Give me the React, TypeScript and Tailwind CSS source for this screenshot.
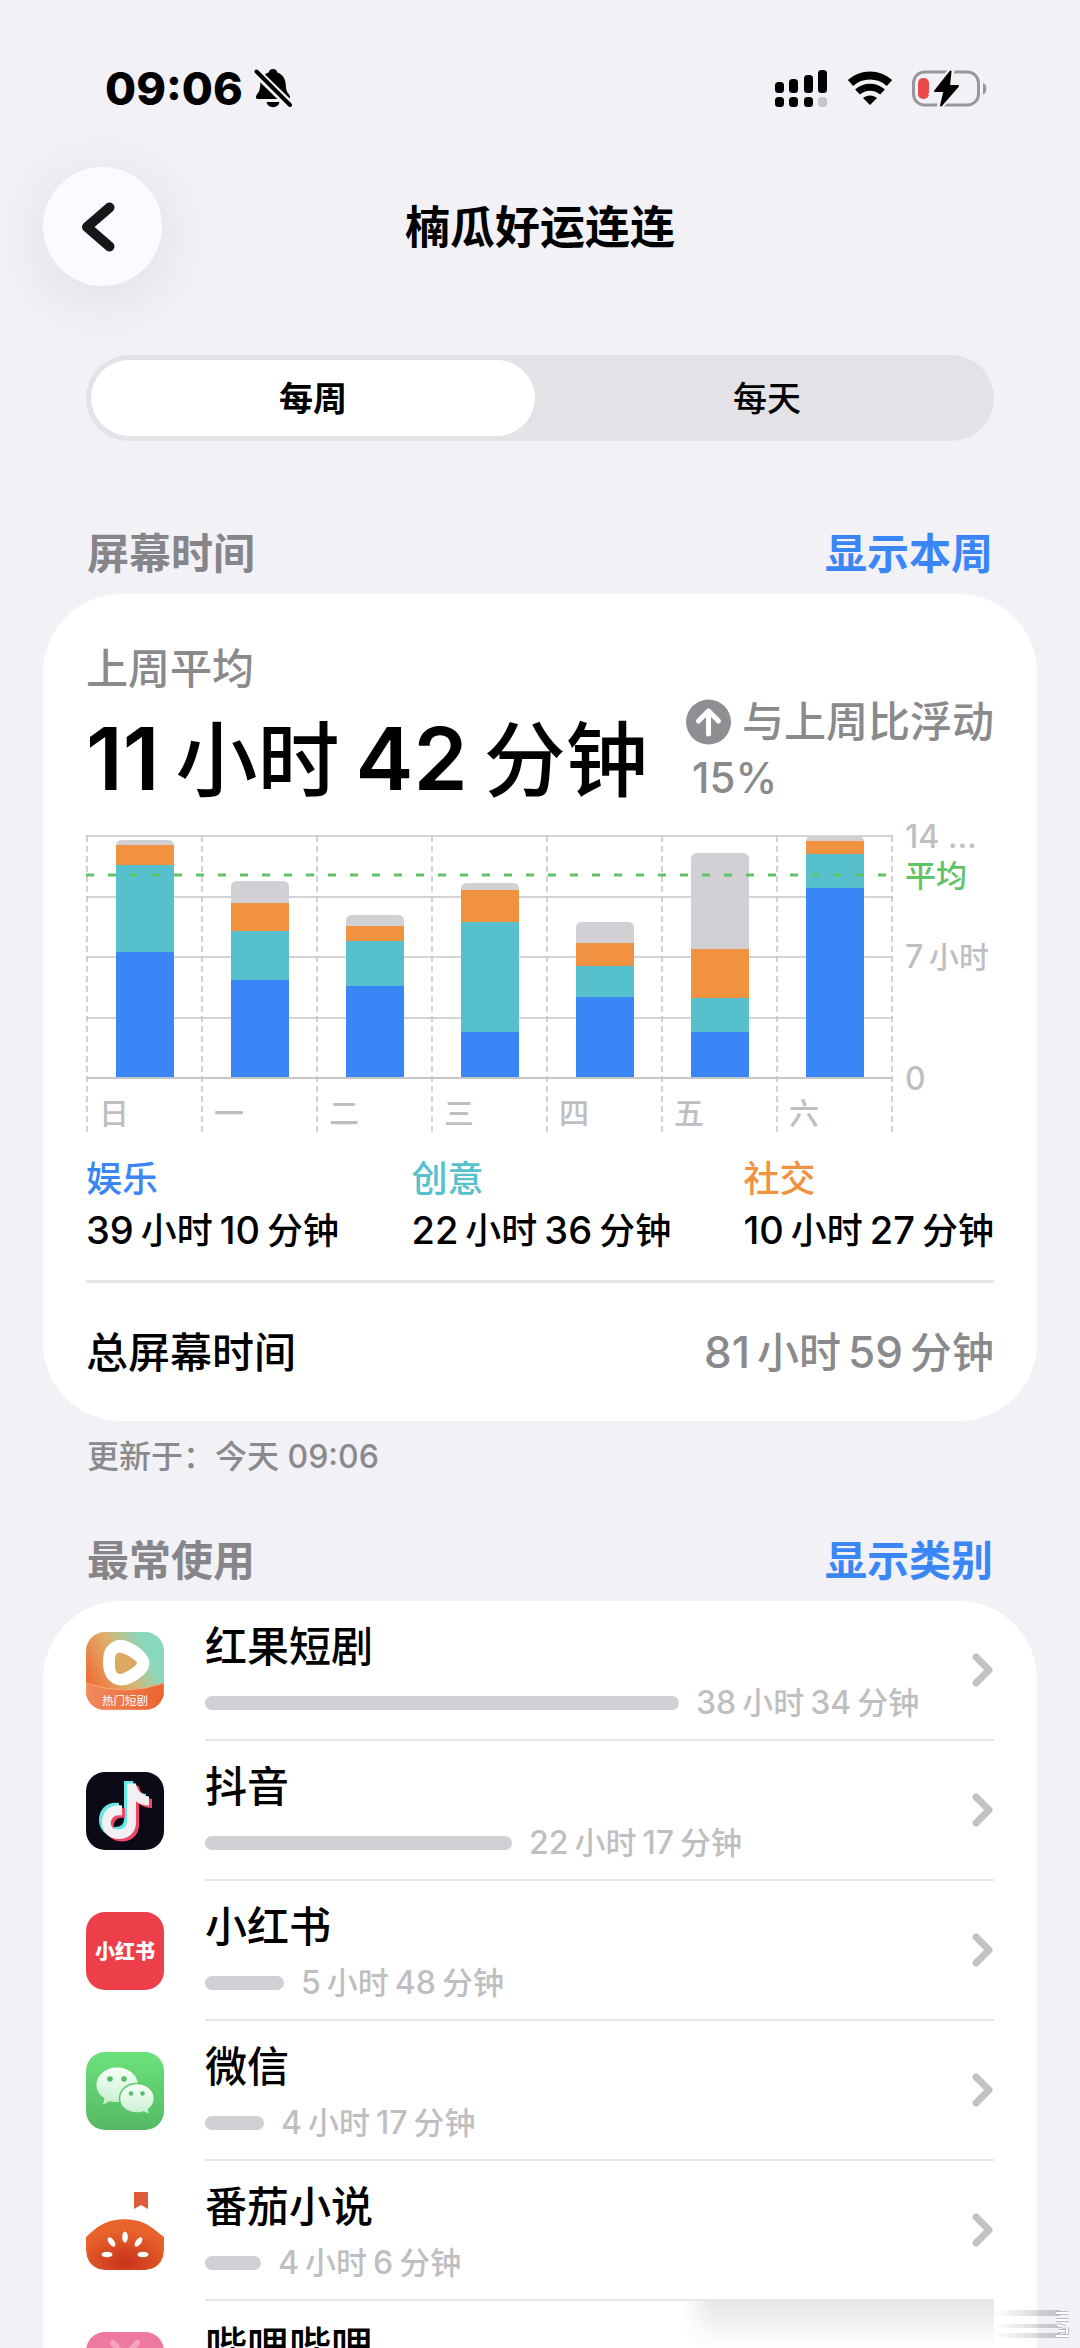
import { useId } from 'react';

const FONT = "font-[Inter,'Noto_Sans_CJK_SC',sans-serif]";

const days = [
  { label: '日', blue: 126, teal: 87, orange: 20, gray: 5 },
  { label: '一', blue: 98, teal: 49, orange: 28, gray: 22 },
  { label: '二', blue: 92, teal: 45, orange: 15, gray: 11 },
  { label: '三', blue: 46, teal: 110, orange: 32, gray: 7 },
  { label: '四', blue: 81, teal: 31, orange: 23, gray: 21 },
  { label: '五', blue: 46, teal: 34, orange: 49, gray: 96 },
  { label: '六', blue: 190, teal: 34, orange: 13, gray: 5 },
];

const categories = [
  { name: '娱乐', color: 'text-[#3a86f7]', hours: 39, minutes: 10 },
  { name: '创意', color: 'text-[#56c1cd]', hours: 22, minutes: 36 },
  { name: '社交', color: 'text-[#f19240]', hours: 10, minutes: 27 },
];

const apps = [
  { name: '红果短剧', bar: 474, hours: 38, minutes: 34, Icon: HongguoIcon },
  { name: '抖音', bar: 307, hours: 22, minutes: 17, Icon: DouyinIcon },
  { name: '小红书', bar: 79, hours: 5, minutes: 48, Icon: XhsIcon },
  { name: '微信', bar: 59, hours: 4, minutes: 17, Icon: WechatIcon },
  { name: '番茄小说', bar: 56, hours: 4, minutes: 6, Icon: FanqieIcon },
  { name: '哔哩哔哩', bar: 50, hours: 3, minutes: 40, Icon: BiliIcon },
];

// digits run a bit larger than the Chinese units next to them
const durationStyles = {
  hero: { wrap: 'gap-[16px]', num: 'text-[87px] font-semibold', unit: 'text-[82px] font-medium' },
  total: { wrap: 'gap-[7px]', num: 'text-[44px]', unit: 'text-[42px]' },
  category: { wrap: 'gap-[7px]', num: 'text-[38px]', unit: 'text-[36px]' },
  app: { wrap: 'gap-[6px]', num: 'text-[32px]', unit: 'text-[31px]' },
};

function Duration({
  hours,
  minutes,
  size,
}: {
  hours: number;
  minutes: number;
  size: keyof typeof durationStyles;
}) {
  const s = durationStyles[size];
  return (
    <span className={`inline-flex items-baseline font-medium whitespace-nowrap ${s.wrap}`}>
      <span className={s.num}>{hours}</span>
      <span className={s.unit}>小时</span>
      <span className={s.num}>{minutes}</span>
      <span className={s.unit}>分钟</span>
    </span>
  );
}

function StatusBar() {
  return (
    <div className="flex h-[176px] items-center justify-between pr-[93px] pl-[105px]">
      <div className="flex items-center gap-[10px]">
        <span className="text-[45px] leading-none font-extrabold">09:06</span>
        <svg width="40" height="40" viewBox="0 0 40 40" aria-hidden="true">
          <path d="M20 1c2.600 0 4 1.600 4.300 3.500C30 6.500 32.500 11 32.800 17c.2 5 1.200 7 3.200 9.500 1.500 2 1.500 4.500-1 4.500H5c-2.600 0-2.600-2.500-1-4.500 2-2.500 3-4.500 3.200-9.500.3-6 3-10.500 8.500-12.500C16 2.600 17.400 1 20 1z" />
          <path d="M13.500 34h13c-.6 3-3 5.200-6.500 5.200s-5.900-2.200-6.500-5.200z" />
          <path d="M2 3L38 38" stroke="#f1f1f6" strokeWidth="9" />
          <path d="M3.500 3.500L37 37" stroke="#000" strokeWidth="4" strokeLinecap="round" />
        </svg>
      </div>
      <div className="flex items-center gap-[19px]">
        <svg width="53" height="38" viewBox="0 0 53 38" aria-hidden="true">
          <rect x="0" y="13" width="9" height="11" rx="3.500" />
          <rect x="14" y="10" width="9" height="14" rx="3.500" />
          <rect x="29" y="6" width="9" height="18" rx="3.500" />
          <rect x="43" y="1" width="9" height="23" rx="3.500" />
          <rect x="0" y="28" width="9" height="10" rx="3.500" />
          <rect x="14" y="28" width="9" height="10" rx="3.500" />
          <rect x="29" y="28" width="9" height="10" rx="3.500" />
          <rect x="43" y="28" width="9" height="10" rx="3.500" fill="#c5c5c9" />
        </svg>
        <svg width="46" height="34" viewBox="0 0 46 34" fill="none" stroke="#000" aria-hidden="true">
          <path d="M3.500 12C14.500 2 31.500 2 42.500 12" strokeWidth="8" strokeLinejoin="round" />
          <path d="M10.500 21c7-6.300 18-6.300 25 0" strokeWidth="7" />
          <path d="M16 27c4-3.500 10-3.500 14 0L23 34z" fill="#000" stroke="none" />
        </svg>
        <svg width="75" height="37" viewBox="0 0 75 37" aria-hidden="true">
          <rect x="1.500" y="2" width="65" height="33" rx="11" fill="none" stroke="#98989c" strokeWidth="3" />
          <path d="M71 13c4.500 1.500 4.500 10 0 11.500z" fill="#98989c" />
          <rect x="6" y="8" width="11" height="21" rx="5" fill="#ea4b48" />
          <path d="M39.500 0L22 21.500h9L28 36.500l18.500-21h-9.500z" fill="#f1f1f6" stroke="#f1f1f6" strokeWidth="6" />
          <path d="M38.500 1.500L23 21h9.500L29 35.500l17-19.500h-9z" stroke="#000" strokeWidth="2" strokeLinejoin="round" />
        </svg>
      </div>
    </div>
  );
}

function NavBar() {
  return (
    <header className="-mt-[9px] grid h-[119px] grid-cols-[1fr_auto_1fr] items-center px-[43px]">
      <button
        aria-label="返回"
        className="flex size-[119px] items-center justify-center rounded-full bg-[#fbfbff] shadow-[0_10px_70px_rgba(0,0,0,0.09)]"
      >
        <svg width="34" height="50" viewBox="0 0 34 50" fill="none" className="mr-[9px]" aria-hidden="true">
          <path d="M28.500 5.500L6 25l22.500 19.500" stroke="#17171a" strokeWidth="10" strokeLinecap="round" strokeLinejoin="round" />
        </svg>
      </button>
      <h1 className="pt-[2px] text-[45px] leading-none font-bold">楠瓜好运连连</h1>
    </header>
  );
}

function SectionHeader({ title, action }: { title: string; action: string }) {
  return (
    <div className="flex items-center justify-between px-[87px] text-[42px] leading-[60px] font-bold">
      <h2 className="text-[#86868a]">{title}</h2>
      <a href="#" className="text-[#3a86f7]">
        {action}
      </a>
    </div>
  );
}

// plot area is 807 x 242, one column per day
function UsageChart() {
  const id = useId();
  const colW = 115;
  const base = 248;
  return (
    <svg viewBox="0 0 908 310" className="block w-full overflow-visible" role="img" aria-label="每日屏幕时间">
      {[6, 67, 127, 188].map((y) => (
        <path key={y} d={`M0 ${y}H807`} stroke="#c6c6c8" strokeWidth="1.500" />
      ))}
      {[0, 1, 2, 3, 4, 5, 6, 7].map((i) => (
        <path key={i} d={`M${i * colW + 1} 6V304`} stroke="#c4c4c6" strokeWidth="1.500" strokeDasharray="6 4" />
      ))}
      {days.map((d, i) => {
        const x = i * colW + 30;
        const total = d.blue + d.teal + d.orange + d.gray;
        return (
          <g key={d.label}>
            <clipPath id={`${id}-${i}`}>
              <path d={`M${x} ${base}V${base - total + 6}q0-6 6-6h46q6 0 6 6V${base}z`} />
            </clipPath>
            <g clipPath={`url(#${id}-${i})`}>
              <rect x={x} y={base - total} width="58" height={total} fill="#d0d0d5" />
              <rect x={x} y={base - d.blue - d.teal - d.orange} width="58" height={d.orange} fill="#f19240" />
              <rect x={x} y={base - d.blue - d.teal} width="58" height={d.teal} fill="#56c1cd" />
              <rect x={x} y={base - d.blue} width="58" height={d.blue} fill="#3a86f7" />
            </g>
            <text x={i * colW + 13} y="294" fontSize="30" fill="#bfbfc2" fontWeight="500">
              {d.label}
            </text>
          </g>
        );
      })}
      <path d={`M0 ${base}H807`} stroke="#c6c6c8" strokeWidth="2" />
      <path d="M0 45H807" stroke="#5fc466" strokeWidth="3" strokeDasharray="8 14" />
      <g fontSize="32" fill="#bfbfc2" fontWeight="500">
        <text x="819" y="18">14 …</text>
        <text x="819" y="57" fontSize="31" fill="#5fc466">平均</text>
        <text x="819" y="138">7</text>
        <text x="843" y="138" fontSize="30">小时</text>
        <text x="819" y="260">0</text>
      </g>
    </svg>
  );
}

function SummaryCard() {
  return (
    <section className="mx-[43px] rounded-[78px] bg-white px-[43px] pt-[50px]">
      <p className="text-[42px] leading-[50px] font-medium text-[#8a8a8c]">上周平均</p>
      <div className="flex h-[136px] items-start justify-between">
        <p className="pt-[13px] leading-[104px]">
          <Duration hours={11} minutes={42} size="hero" />
        </p>
        <div className="text-[42px] leading-[56px] font-medium text-[#8a8a8c]">
          <div className="flex items-center gap-[11px]">
            <svg width="45" height="46" viewBox="0 0 45 46" fill="none" aria-hidden="true">
              <circle cx="22.500" cy="23" r="22.500" fill="#8e8e93" />
              <path d="M22.500 35V12M12.500 22l10-10 10 10" stroke="#fff" strokeWidth="5" strokeLinecap="round" strokeLinejoin="round" />
            </svg>
            <span>与上周比浮动</span>
          </div>
          <div className="pl-[6px]">15%</div>
        </div>
      </div>
      <UsageChart />
      <dl className="flex justify-between pt-[13px]">
        {categories.map((c) => (
          <div key={c.name}>
            <dt className={`text-[36px] leading-[52px] font-medium ${c.color}`}>{c.name}</dt>
            <dd className="leading-[50px]">
              <Duration hours={c.hours} minutes={c.minutes} size="category" />
            </dd>
          </div>
        ))}
      </dl>
      <div className="mt-[17px] flex h-[141px] items-center justify-between border-t-[3px] border-[#e6e6e8] text-[42px]">
        <span className="font-medium">总屏幕时间</span>
        <span className="text-[#8a8a8c]">
          <Duration hours={81} minutes={59} size="total" />
        </span>
      </div>
    </section>
  );
}

function HongguoIcon() {
  return (
    <svg viewBox="0 0 78 78" className="size-full">
      <defs>
        <linearGradient id="hg-bg" x1="0" y1="0.700" x2="1" y2="0.200">
          <stop offset="0" stopColor="#f0672f" />
          <stop offset="0.450" stopColor="#dfae6a" />
          <stop offset="0.800" stopColor="#8ad8bb" />
        </linearGradient>
        <linearGradient id="hg-foot" x1="0" y1="0" x2="1" y2="0">
          <stop offset="0" stopColor="#f08a5c" />
          <stop offset="1" stopColor="#ec6430" />
        </linearGradient>
      </defs>
      <rect width="78" height="78" fill="url(#hg-bg)" />
      <path d="M0 51q39 14 78 0v27H0z" fill="url(#hg-foot)" stroke="#f7a874" strokeWidth="1" />
      <path d="M32 14c-8 3-9 9-9 16s1 14 9 17 29-10 25-18S38 12 32 14z" fill="#fff" stroke="#fff" strokeWidth="12" strokeLinejoin="round" />
      <path d="M32 21c4-2 19 7 19 10s-13 11-17 11-5-4-5-10 0-10 3-11z" fill="#dba85f" />
      <text x="39" y="73" textAnchor="middle" fontSize="11.500" fill="#fff">
        热门短剧
      </text>
    </svg>
  );
}

function DouyinIcon() {
  const note =
    'M38 9h9c1 7 6 12 13 13v9c-5 0-9-1.500-13-4v21c0 22-34 22-34 0 0-12 9-19 20-17v10c-13-3-15 14-4 14 6 0 9-3 9-8z';
  return (
    <svg viewBox="0 0 78 78" className="size-full">
      <rect width="78" height="78" fill="#0b0a16" />
      <path d={note} fill="#66e8e4" />
      <path d={note} fill="#ee4767" transform="translate(6 5)" />
      <path d={note} fill="#f3f0f4" transform="translate(3 2.500)" />
    </svg>
  );
}

function XhsIcon() {
  return (
    <svg viewBox="0 0 78 78" className="size-full">
      <rect width="78" height="78" fill="#ec3f4a" />
      <text x="39" y="47" textAnchor="middle" fontSize="20" fontWeight="900" fill="#fff">
        小红书
      </text>
    </svg>
  );
}

function WechatIcon() {
  return (
    <svg viewBox="0 0 78 78" className="size-full">
      <defs>
        <linearGradient id="wx-bg" x1="0" y1="0" x2="0" y2="1">
          <stop offset="0" stopColor="#6be27b" />
          <stop offset="1" stopColor="#56b964" />
        </linearGradient>
        <linearGradient id="wx-bubble" x1="0" y1="0" x2="0" y2="1">
          <stop offset="0" stopColor="#f6fff8" />
          <stop offset="1" stopColor="#c8efce" />
        </linearGradient>
      </defs>
      <rect width="78" height="78" fill="url(#wx-bg)" />
      <path d="M31 15.500c12 0 21 8 21 17.500S43 50 31 50c-3 0-5-.4-7-1l-7 3.500 1.500-6.500C13 43 10.500 38 10.500 33c0-9.500 9-17.500 20.500-17.500z" fill="url(#wx-bubble)" />
      <path d="M51 31.500c10 0 17.500 6.500 17.500 15 0 4.500-2.500 8-6 11l1.200 5.500-6-3c-2 .8-4.500 1-6.700 1-10 0-17.500-6-17.500-14.500s7.500-15 17.500-15z" fill="url(#wx-bubble)" stroke="#5fc76d" strokeWidth="1.500" />
      <g fill="#57bd66">
        <circle cx="24" cy="27" r="2.800" />
        <circle cx="38" cy="27" r="2.800" />
        <circle cx="45" cy="41.500" r="2.300" />
        <circle cx="56.500" cy="41.500" r="2.300" />
      </g>
    </svg>
  );
}

function FanqieIcon() {
  return (
    <svg viewBox="0 0 78 78" className="size-full">
      <defs>
        <radialGradient id="fq" cx="0.500" cy="0.850" r="0.650">
          <stop offset="0" stopColor="#c9321a" />
          <stop offset="1" stopColor="#e8642c" />
        </radialGradient>
      </defs>
      <rect width="78" height="78" fill="#fff" />
      <path d="M48 0h14v17l-7-4-7 4z" fill="#dc5c3a" />
      <path d="M0 45C6 40 10 35 18 31.500 30 26 46 26 58 31c8 3.500 13 9 20 14v12c0 14-8 21-19 21H19C8 78 0 71 0 57z" fill="url(#fq)" />
      <g fill="#fff">
        <ellipse cx="39" cy="45" rx="2.800" ry="5.500" />
        <ellipse cx="25.500" cy="50" rx="2.800" ry="5.500" transform="rotate(-35 25.500 50)" />
        <ellipse cx="52.500" cy="50" rx="2.800" ry="5.500" transform="rotate(35 52.500 50)" />
        <ellipse cx="21" cy="62.500" rx="5.500" ry="2.800" />
        <ellipse cx="57" cy="62.500" rx="5.500" ry="2.800" />
      </g>
    </svg>
  );
}

function BiliIcon() {
  return (
    <svg viewBox="0 0 78 78" className="size-full">
      <rect width="78" height="78" fill="#ef78a3" />
      <path d="M27 11l9 10M51 11l-9 10" stroke="#f5a3c1" strokeWidth="6" strokeLinecap="round" />
      <rect x="13" y="22" width="52" height="42" rx="10" fill="none" stroke="#fff" strokeWidth="6" />
    </svg>
  );
}

function AppRow({ app }: { app: (typeof apps)[number] }) {
  const { name, bar, hours, minutes, Icon } = app;
  return (
    <li>
      <a href="#" className="flex h-[140px] items-center gap-[41px]">
        <span className="size-[78px] shrink-0 overflow-hidden rounded-[19px]">
          <Icon />
        </span>
        <span className="flex h-full grow items-center justify-between border-b-2 border-[#e6e6e8]">
          <span className="flex flex-col pt-[4px]">
            <span className="text-[42px] leading-[62px] font-medium">{name}</span>
            <span className="flex h-[50px] items-center gap-[17px] text-[#bfbfc2]">
              <span className="h-[14px] rounded-full bg-[#d0d0d5]" style={{ width: bar }} />
              <Duration hours={hours} minutes={minutes} size="app" />
            </span>
          </span>
          <svg width="22" height="34" viewBox="0 0 22 34" fill="none" aria-hidden="true">
            <path d="M4 4l13 13L4 30" stroke="#c2c2c4" strokeWidth="7" strokeLinecap="round" strokeLinejoin="round" />
          </svg>
        </span>
      </a>
    </li>
  );
}

function CornerSmear() {
  return (
    <div className="pointer-events-none absolute right-0 bottom-0 flex h-[47px]">
      <div className="w-[312px] bg-linear-to-b from-[#e6e6e8] to-white mask-l-from-90%" />
      <svg width="86" height="47" viewBox="0 0 86 47" aria-hidden="true">
        <defs>
          <linearGradient id="smear" x1="0" x2="1">
            <stop offset="0" stopColor="#9a9a9e" stopOpacity="0" />
            <stop offset="1" stopColor="#9a9a9e" stopOpacity="0.550" />
          </linearGradient>
        </defs>
        <g fill="url(#smear)">
          <rect y="9" width="66" height="6" />
          <rect y="23" width="66" height="4" />
          <rect y="32" width="66" height="5" />
        </g>
        <path d="M62 12h12M62 19h13M63 24l8 2M64 30h7M73 26v7M62 35h13" stroke="#bcbcc0" strokeWidth="4" />
        <path d="M62 12h12M62 19h13M63 24l8 2M64 30h7M73 26v7M62 35h13" stroke="#fff" strokeWidth="2" />
      </svg>
    </div>
  );
}

export default function App() {
  return (
    <main className={`relative h-screen overflow-y-auto bg-[#f1f1f6] text-black [scrollbar-width:none] ${FONT}`}>
      <StatusBar />
      <NavBar />

      <div className="mx-[86px] mt-[69px] flex h-[86px] rounded-full bg-[#e2e2e7] p-[5px] text-[34px]">
        <button className="h-full w-[calc(50%-5px)] rounded-full bg-white font-bold">每周</button>
        <button className="h-full flex-1 rounded-full pl-[10px] font-medium">每天</button>
      </div>

      <div className="mt-[83px] mb-[10px]">
        <SectionHeader title="屏幕时间" action="显示本周" />
      </div>
      <SummaryCard />
      <p className="px-[87px] pt-[13px] text-[32px] leading-[46px] font-medium text-[#8a8a8e]">更新于：今天 09:06</p>

      <div className="mt-[51px] mb-[10px]">
        <SectionHeader title="最常使用" action="显示类别" />
      </div>
      <ul className="mx-[43px] rounded-t-[78px] bg-white px-[43px]">
        {apps.map((app) => (
          <AppRow key={app.name} app={app} />
        ))}
      </ul>

      <CornerSmear />
    </main>
  );
}
